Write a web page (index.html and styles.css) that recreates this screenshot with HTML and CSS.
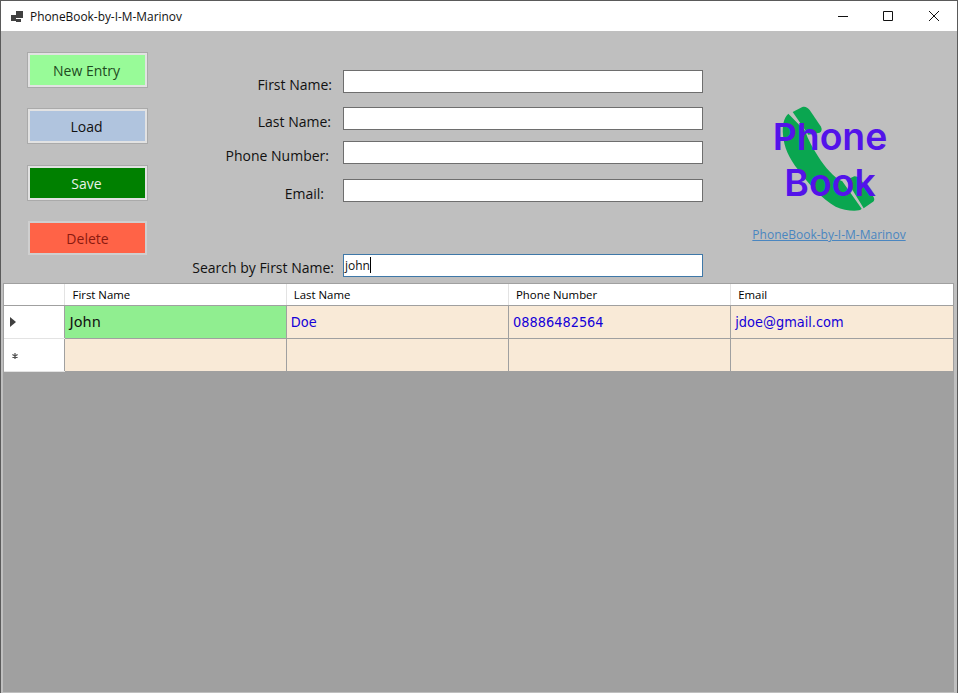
FILE: index.html
```html
<!DOCTYPE html>
<html lang="en">
<head>
  <meta charset="UTF-8">
  <title>PhoneBook-by-I-M-Marinov</title>
  <link rel="stylesheet" href="styles.css">
</head>
<body>
  <div class="window">
    <div class="titlebar">
      <svg class="app-icon" width="12" height="11" viewBox="0 0 12 11">
        <path d="M0 4h5v6H0zM5 0h7v7H5zM5 8h5v3H5z" fill="#404040"/>
      </svg>
      <span class="title">PhoneBook-by-I-M-Marinov</span>
      <div class="controls">
        <svg width="10" height="10" viewBox="0 0 10 10"><path d="M0 5.5h10" stroke="#111" fill="none"/></svg>
        <svg class="ctl-max" width="10" height="10" viewBox="0 0 10 10"><path d="M.5.5h9v9h-9z" stroke="#111" fill="none"/></svg>
        <svg width="10" height="10" viewBox="0 0 10 10"><path d="M0 0l10 10M10 0L0 10" stroke="#111" fill="none"/></svg>
      </div>
    </div>

    <div class="panel">
      <div class="buttons">
        <button class="btn btn-new">New Entry</button>
        <button class="btn btn-load">Load</button>
        <button class="btn btn-save">Save</button>
        <button class="btn btn-delete">Delete</button>
      </div>

      <form class="fields">
        <div class="row row-first">
          <label class="pad-first">First Name:</label>
          <input type="text" class="field">
        </div>
        <div class="row row-last">
          <label class="pad-last">Last Name:</label>
          <input type="text" class="field">
        </div>
        <div class="row row-phone">
          <label class="pad-phone">Phone Number:</label>
          <input type="text" class="field">
        </div>
        <div class="row row-email">
          <label class="pad-email">Email:</label>
          <input type="text" class="field">
        </div>
        <div class="row row-search">
          <label class="pad-search">Search by First Name:</label>
          <div class="field field-active">john<span class="caret"></span></div>
        </div>
      </form>

      <div class="brand">
        <svg class="logo" width="220" height="125" viewBox="0 0 660 375">
          <path d="M208 71 C194 84 190 104 192 135 C195 172 210 205 238 240 C268 282 310 328 350 350 C372 360 400 364 420 361 C424 360 426 358 428 356 L370 274 C345 262 318 232 298 200 C280 172 268 150 258 122 Z" fill="#0aa650"/>
          <path d="M221 66 L250 51 C258 48 266 52 272 60 L306 110 C310 118 308 124 302 128 L268 134 Z" fill="#0aa650"/>
          <path d="M382 270 L406 259 C414 259 420 262 426 270 L462 318 C468 326 467 333 460 337 L434 355 Z" fill="#0aa650"/>
          <text x="333" y="181" class="logo-text">Phone</text>
          <text x="333" y="319" class="logo-text">Book</text>
        </svg>
        <a class="repo-link" href="#">PhoneBook-by-I-M-Marinov</a>
      </div>
    </div>

    <div class="grid-area">
      <table class="grid">
        <colgroup>
          <col class="col-head">
          <col class="col-a">
          <col class="col-a">
          <col class="col-a">
          <col class="col-a">
        </colgroup>
        <thead>
          <tr>
            <th class="corner"></th>
            <th class="first-col">First Name</th>
            <th>Last Name</th>
            <th>Phone Number</th>
            <th>Email</th>
          </tr>
        </thead>
        <tbody>
          <tr>
            <td class="rowhead"><svg width="6" height="10" viewBox="0 0 6 10"><path d="M0 0l6 5-6 5z" fill="#404040"/></svg></td>
            <td class="selected">John</td>
            <td>Doe</td>
            <td>08886482564</td>
            <td>jdoe@gmail.com</td>
          </tr>
          <tr>
            <td class="rowhead"><svg class="new-mark" width="6" height="6" viewBox="0 0 6 6"><path d="M3 0v6M.4 1.5l5.2 3M5.6 1.5l-5.2 3" stroke="#505050" stroke-width="1.2" fill="none"/></svg></td>
            <td></td>
            <td></td>
            <td></td>
            <td></td>
          </tr>
        </tbody>
      </table>
    </div>
  </div>
</body>
</html>
```

FILE: styles.css
```css
* {
  box-sizing: border-box;
}
html, body {
  margin: 0;
  height: 100%;
  overflow: hidden;
}
body {
  font-family: "Open Sans", sans-serif;
  background: #bfbfbf;
  color: #111;
}
.window {
  height: 693px;
  display: flex;
  flex-direction: column;
  border: 1px solid #5a5a5a;
  border-bottom: 0;
  background: #bfbfbf;
}
.titlebar {
  height: 30px;
  flex: none;
  background: #fff;
  display: flex;
  align-items: center;
  padding-left: 10px;
}
.title {
  margin-left: 7px;
  font-size: 11.9px;
}
.controls {
  margin-left: auto;
  margin-right: 18px;
  display: flex;
  gap: 35px;
}
.ctl-max {
  margin-right: 1px;
}
.panel {
  height: 252px;
  flex: none;
  display: flex;
  padding-left: 26px;
}
.buttons {
  width: 121px;
  flex: none;
  padding-top: 21px;
  display: flex;
  flex-direction: column;
  gap: 20px;
}
.btn {
  width: 121px;
  height: 36px;
  flex: none;
  border: 3px solid #e2e2e2;
  outline: 1px solid #aaa;
  outline-offset: -1px;
  font: 14px "Open Sans", sans-serif;
  padding: 0 2px 0 0;
}
.btn-new {
  background: #98fb98;
  color: #1f4a1f;
}
.btn-load {
  background: #b0c4de;
  color: #111;
}
.btn-save {
  margin-top: 1px;
  background: #008000;
  color: #e8f2e8;
}
.btn-delete {
  width: 119px;
  height: 34px;
  margin-left: 1px;
  border: 2px solid #cfcfcf;
  outline: 0;
  background: #ff6347;
  color: #8b1a10;
  padding-right: 0;
}
.fields {
  width: 555px;
  flex: none;
  padding-top: 39px;
}
.row {
  display: flex;
  height: 23px;
}
.row-last { margin-top: 14px; }
.row-phone { margin-top: 11px; }
.row-email { margin-top: 15px; }
.row-search { margin-top: 52px; }
.row label {
  width: 195px;
  flex: none;
  text-align: right;
  font-size: 14px;
  line-height: 23px;
  padding-top: 3px;
  white-space: nowrap;
}
.row label.pad-search { padding-top: 2px; }
.pad-first { padding-right: 11px; }
.pad-last { padding-right: 12px; }
.pad-phone { padding-right: 14px; }
.pad-email { padding-right: 19px; }
.pad-search { padding-right: 9px; }
.field {
  width: 360px;
  height: 23px;
  border: 1px solid #6e6e6e;
  background: #fff;
  padding: 0 1px;
  font: 12px/21px "Open Sans", sans-serif;
  outline: 0;
}
.field-active {
  border-color: #3f78a8;
}
.caret {
  display: inline-block;
  width: 1px;
  height: 16px;
  background: #000;
  vertical-align: -3px;
}
.brand {
  width: 220px;
  flex: none;
  margin-left: 16px;
  padding-top: 59px;
  display: flex;
  flex-direction: column;
  align-items: center;
}
.logo-text {
  font: 600 112px Inter, sans-serif;
  fill: #5313ea;
  text-anchor: middle;
}
.repo-link {
  font-size: 12px;
  color: #4a86c0;
  margin-top: 11px;
}
.grid-area {
  flex: 1;
  background: #a0a0a0;
  margin: 0 3px 1px 2px;
  padding: 1px 0 0 1px;
}
.grid {
  width: 949px;
  border-collapse: collapse;
  table-layout: fixed;
  font-family: "DejaVu Sans", sans-serif;
  font-stretch: condensed;
  font-size: 14.4px;
}
.col-head { width: 60px; }
.grid th {
  height: 21px;
  background: #fff;
  border-right: 1px solid #e3e3e3;
  border-bottom: 1px solid #a0a0a0;
  text-align: left;
  font: 400 11.4px "Open Sans", sans-serif;
  color: #000;
  padding: 0 0 0 7px;
}
.grid th.first-col {
  padding-left: 8px;
}
.grid td {
  height: 33px;
  background: #f9ead7;
  border-right: 1px solid #a0a0a0;
  border-bottom: 1px solid #a0a0a0;
  color: #1500d8;
  padding: 0 0 0 4px;
}
.grid td:last-child, .grid th:last-child {
  border-right: 0;
}
.grid td.rowhead {
  background: #fff;
  border-bottom-color: #e3e3e3;
  padding-left: 6px;
}
.grid td.rowhead svg {
  display: block;
}
.grid td.rowhead svg.new-mark {
  margin: 2px 0 0 2px;
}
.grid td.selected {
  background: #90ee90;
  color: #111;
  font-stretch: normal;
  padding-left: 5px;
}
```
